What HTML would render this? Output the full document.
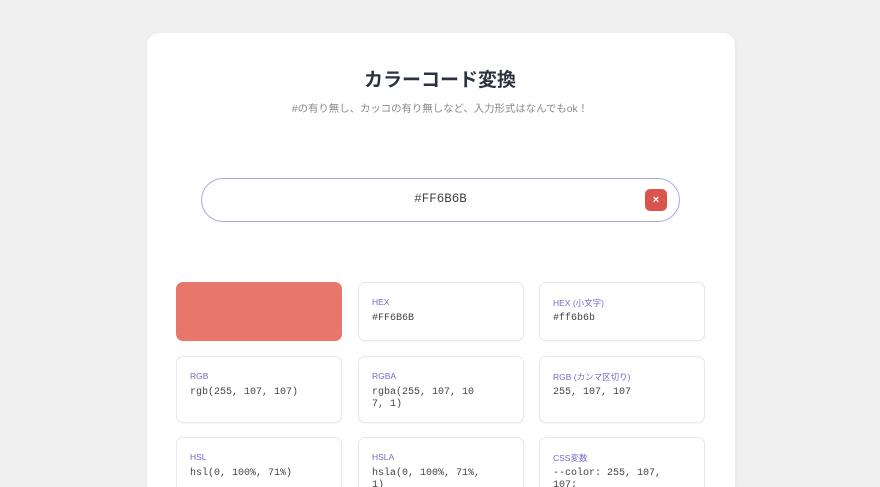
<!DOCTYPE html>
<html><head><meta charset="utf-8"><style>
*{box-sizing:border-box;margin:0;padding:0}
html,body{width:880px;height:487px;overflow:hidden}
body{background:#f0f0f0;font-family:"Liberation Sans","Noto Sans CJK JP",sans-serif;position:relative}
.card{position:absolute;left:147px;top:33px;width:588px;height:454px;background:#fff;border-radius:12px 12px 0 0;box-shadow:0 1px 4px rgba(0,0,0,.06)}
h1{position:absolute;left:0;width:100%;top:65px;text-align:center;font-size:19px;font-weight:bold;color:#2b3340}
.sub{position:absolute;left:0;width:100%;top:100px;text-align:center;font-size:10.4px;color:#888}
.inp{position:absolute;left:201px;top:178px;width:479px;height:44px;border:1.5px solid #a9a6e6;border-radius:22px;background:#fff;text-align:center;line-height:41px;font-family:"Liberation Mono",monospace;font-size:12.5px;color:#444}
.x{position:absolute;left:645px;top:189px;width:22px;height:22px;border-radius:5px;background:#d9534f;color:#fff;font-size:11px;font-weight:bold;text-align:center;line-height:22px}
.b{position:absolute;width:166px;border:1px solid #e8e8ec;border-radius:7px;background:#fff;padding:14px 0 0 13px;box-shadow:0 1px 2px rgba(0,0,0,.04)}
.l{font-size:8.5px;color:#6f6cc9;height:12px}
.v{font-family:"Liberation Mono","Noto Sans CJK JP",monospace;font-size:10px;color:#444;margin-top:4px;line-height:12px;width:110px;word-break:break-all}
</style></head><body>
<div class="card"></div>
<h1>カラーコード変換</h1>
<div class="sub">#の有り無し、カッコの有り無しなど、入力形式はなんでもok！</div>
<div class="inp">#FF6B6B</div>
<div class="x">×</div>
<div class="b" style="left:176px;top:282px;height:59px;background:#e8776b;border-color:#e8776b"></div>
<div class="b" style="left:358px;top:282px;height:59px"><div class="l">HEX</div><div class="v">#FF6B6B</div></div>
<div class="b" style="left:539px;top:282px;height:59px"><div class="l">HEX (小文字)</div><div class="v">#ff6b6b</div></div>
<div class="b" style="left:176px;top:356px;height:67px"><div class="l">RGB</div><div class="v" style="width:120px">rgb(255, 107, 107)</div></div>
<div class="b" style="left:358px;top:356px;height:67px"><div class="l">RGBA</div><div class="v">rgba(255, 107, 10<br>7, 1)</div></div>
<div class="b" style="left:539px;top:356px;height:67px"><div class="l">RGB (カンマ区切り)</div><div class="v">255, 107, 107</div></div>
<div class="b" style="left:176px;top:437px;height:67px"><div class="l">HSL</div><div class="v">hsl(0, 100%, 71%)</div></div>
<div class="b" style="left:358px;top:437px;height:67px"><div class="l">HSLA</div><div class="v">hsla(0, 100%, 71%,<br>1)</div></div>
<div class="b" style="left:539px;top:437px;height:67px"><div class="l">CSS変数</div><div class="v">--color: 255, 107,<br>107;</div></div>
</body></html>
